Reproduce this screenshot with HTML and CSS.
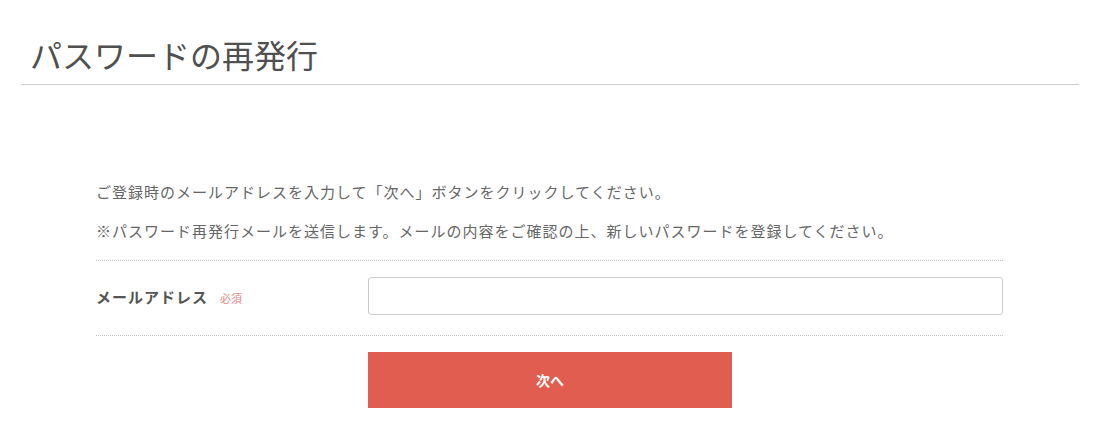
FILE: index.html
```html
<!DOCTYPE html>
<html lang="ja">
<head>
    <meta charset="UTF-8">
    <meta name="viewport" content="width=device-width, initial-scale=1.0">
    <title>パスワードの再発行</title>
    <link rel="stylesheet" href="styles.css">
</head>
<body>

    <div class="page-header">
        <h1 class="page-title">パスワードの再発行</h1>
    </div>

    <div class="reminder">
        <p class="reminder-text">ご登録時のメールアドレスを入力して「次へ」ボタンをクリックしてください。</p>
        <p class="reminder-text">※パスワード再発行メールを送信します。メールの内容をご確認の上、新しいパスワードを登録してください。</p>

        <div class="form-row">
            <div class="form-label">
                メールアドレス<span class="required">必須</span>
            </div>
            <div class="form-field">
                <input type="email" class="text-input" name="email">
            </div>
        </div>

        <div class="form-actions">
            <button type="submit" class="submit-btn">次へ</button>
        </div>
    </div>

</body>
</html>
```

FILE: styles.css
```css
body {
    font-family: 'Liberation Serif', 'Noto Sans CJK JP', serif;
    margin: 0;
    padding: 0;
    background-color: #fff;
    color: #555;
}

.page-header {
    margin: 0 32px 0 21px;
    padding: 34px 0 4px 9px;
    border-bottom: 1px solid #ccc;
}

.page-title {
    margin: 0;
    font-size: 32px;
    font-weight: 400;
    line-height: 46px;
    color: #505050;
}

.reminder {
    width: 907px;
    margin: 89px 0 0 96px;
}

.reminder-text {
    margin: 0;
    font-size: 15px;
    line-height: 39px;
    letter-spacing: 1px;
    color: #666;
}

.reminder-text:last-of-type {
    margin-bottom: 8px;
}

.form-row {
    display: flex;
    align-items: center;
    padding: 16px 0 20px;
    border-top: 1px dotted #c4c4c4;
    border-bottom: 1px dotted #c4c4c4;
}

.form-label {
    width: 272px;
    font-size: 15px;
    font-weight: 700;
    letter-spacing: 1px;
    color: #555;
}

.required {
    margin-left: 12px;
    font-size: 11px;
    font-weight: 400;
    letter-spacing: 0;
    color: #e08a84;
}

.form-field {
    flex: 1;
}

.text-input {
    display: block;
    width: 100%;
    height: 38px;
    box-sizing: border-box;
    border: 1px solid #ccc;
    border-radius: 3px;
    padding: 0 10px;
    font-size: 15px;
}

.form-actions {
    padding: 16px 0 0 272px;
}

.submit-btn {
    display: block;
    width: 364px;
    height: 56px;
    border: 0;
    background: #e05d4f;
    color: #fff;
    font-family: 'Noto Sans CJK JP', sans-serif;
    font-size: 14px;
    font-weight: 700;
}
```
